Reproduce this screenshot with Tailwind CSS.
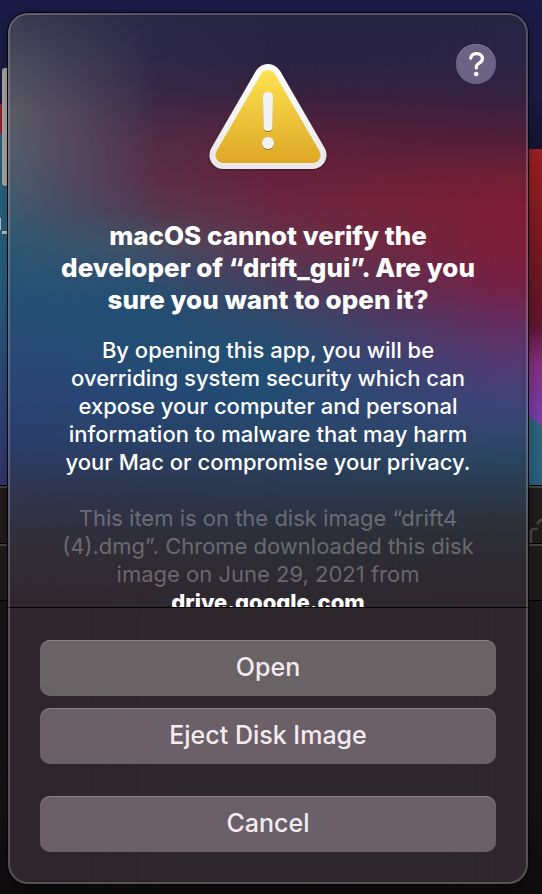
<!DOCTYPE html>
<html lang="en">
<head>
<meta charset="utf-8">
<meta name="viewport" content="width=device-width, initial-scale=1">
<title>macOS cannot verify the developer</title>
<script src="https://cdn.jsdelivr.net/npm/@tailwindcss/browser@4"></script>
</head>
<body class="bg-[#1a1b48] font-['Inter','Liberation_Sans',sans-serif]">
<div class="relative isolate flex h-screen overflow-hidden pt-[13px] pr-[14px] pb-[10px] pl-[8px]">

  <!-- Desktop: wallpaper, a file icon and the windows behind the dialog -->
  <div class="absolute inset-0 -z-10 bg-[linear-gradient(to_bottom,#1a1b47_0px,#1d1d49_90px,#171533_149px)]" aria-hidden="true">
    <div class="absolute left-0 top-[104px] h-[30px] w-10 bg-[#9c2531]"></div>
    <div class="absolute left-0 top-[134px] h-[351px] w-10 bg-[linear-gradient(to_bottom,#2d6c88,#2a6585_40%,#2f5080_68%,#363875)]"></div>
    <div class="absolute left-[2px] top-[68px] h-[118px] w-10 rounded-[3px] bg-[#b5b4b0] shadow"></div>
    <div class="absolute left-0 top-[218px] h-[12px] w-px bg-[#c9cccf]"></div>
    <div class="absolute left-[2px] top-[231px] h-[3px] w-5 bg-[#c9cccf] shadow"></div>
    <svg class="absolute right-0 top-[149px] h-[336px] w-10" viewBox="0 0 40 336" preserveAspectRatio="none">
      <defs>
        <linearGradient id="wall" x1="0" y1="0" x2="0" y2="1">
          <stop offset="0" stop-color="#a52125"/><stop offset=".3" stop-color="#7c1a22"/>
          <stop offset=".52" stop-color="#641530"/><stop offset=".64" stop-color="#8b3287"/>
          <stop offset=".8" stop-color="#7b42b0"/><stop offset="1" stop-color="#7b42b0"/>
        </linearGradient>
        <linearGradient id="sea" x1="0" y1="0" x2="0" y2="1">
          <stop offset="0" stop-color="#336a82"/><stop offset="1" stop-color="#2c6487"/>
        </linearGradient>
      </defs>
      <rect width="40" height="336" fill="url(#wall)"/>
      <path d="M0 246L27 267L40 277V336H0Z" fill="url(#sea)"/>
    </svg>
    <div class="absolute inset-x-0 top-[485px] bottom-0 flex flex-col bg-[#161213]">
      <div class="h-[58px] border-t border-black bg-[#231e1e] shadow-[inset_0_2px_0_#4a4546]"></div>
      <div class="h-[57px] border-t border-black bg-[#221d1d] shadow-[inset_0_2px_0_#4a4546]"></div>
      <div class="flex-1 border-t border-black bg-[linear-gradient(to_bottom,#1b1617,#171213_70%,#0f0c0d)]"></div>
    </div>
    <svg class="absolute right-0 top-[515px] h-7 w-[14px]" viewBox="0 0 14 28" fill="none" stroke="#4d4849" stroke-width="2.500">
      <path d="M3 28V17Q3 14 6 14H10"/><path d="M9 9L14 4"/>
    </svg>
  </div>

  <main class="relative isolate flex flex-1 flex-col overflow-hidden rounded-[20px] bg-[#2f262c] shadow-[0_0_0_1px_#050408,0_8px_24px_rgba(0,0,0,0.4)]" role="alertdialog" aria-labelledby="title" aria-describedby="message">
    <!-- Wallpaper colours showing through the translucent panel -->
    <div class="absolute inset-0 -z-10 bg-[linear-gradient(to_bottom,#3a394f_0px,#4a4a5b_47px,#595864_97px,#555a69_137px,#44586d_187px,#2e5672_237px,#264f74_287px,#294a75_337px,#2b4474_387px,#2b3d66_437px,#31344b_487px,#322e38_537px,#2f262c_600px)]"></div>
    <div class="absolute inset-0 -z-10 bg-[linear-gradient(to_bottom,#292647_0px,#2f2949_47px,#3c2a47_87px,#512d47_127px,#5a2f49_167px,#53394f_197px,#435064_232px,#2f5070_262px,#235074_287px,#234e74_337px,#274774_387px,#2a4064_437px,#2e3448_487px,#302d36_537px,#2f272c_600px)] [mask-image:linear-gradient(to_right,transparent_10px,black_150px)]"></div>
    <div class="absolute inset-0 -z-10 bg-[linear-gradient(to_bottom,#272443_0px,#292344_47px,#35223f_77px,#55213c_117px,#64213c_157px,#6b2640_187px,#643149_227px,#4b3c5a_267px,#2f4a6b_307px,#215074_347px,#244c73_387px,#294363_437px,#2c3850_477px,#2d303c_517px,#2e282d_600px)] [mask-image:linear-gradient(to_right,transparent_130px,black_270px)]"></div>
    <div class="absolute inset-0 -z-10 bg-[linear-gradient(to_bottom,#272443_0px,#2a2444_47px,#38213f_87px,#521e39_127px,#6b1f36_157px,#7c1d34_192px,#7c1f3a_237px,#742249_277px,#662c5e_307px,#543870_347px,#3f4277_387px,#34466f_417px,#2a4460_447px,#2b3a4c_477px,#2c323b_507px,#2d2a30_547px,#2e272c_600px)] [mask-image:linear-gradient(to_right,transparent_260px,black_490px)]"></div>

    <button type="button" aria-label="Help" class="absolute top-[31px] right-8 flex size-10 items-center justify-center rounded-full bg-[#6b6383] text-white shadow-[inset_0_1px_0_#81799a]">
      <svg class="size-10" viewBox="0 0 40 40" fill="none" aria-hidden="true">
        <path d="M14.800 14.200C15.100 11.300 17.200 9.600 20.600 9.600C24.200 9.600 26.400 11.600 26.400 14.400C26.400 16.600 25.300 17.900 23.200 19.200C21.100 20.500 20.300 21.400 20.300 23.200V24" stroke="currentColor" stroke-width="3.200" stroke-linecap="round"/>
        <circle cx="20.200" cy="30" r="2.300" fill="currentColor"/>
      </svg>
    </button>

    <section class="flex min-h-0 flex-1 basis-0 flex-col items-center overflow-hidden px-8 pt-[47px] text-center text-white">
      <svg class="h-[112px] w-[124px] shrink-0" viewBox="0 0 124 112" role="img" aria-label="Warning">
        <defs>
          <linearGradient id="rim" gradientUnits="userSpaceOnUse" x1="0" y1="3" x2="0" y2="109"><stop stop-color="#fff"/><stop offset="1" stop-color="#e8e8ea"/></linearGradient>
          <linearGradient id="gold" gradientUnits="userSpaceOnUse" x1="0" y1="9" x2="0" y2="103"><stop stop-color="#fde352"/><stop offset="1" stop-color="#dfa725"/></linearGradient>
          <filter id="drop" x="-20%" y="-20%" width="140%" height="140%"><feDropShadow dx="0" dy="1" stdDeviation="1" flood-opacity=".35"/></filter>
          <filter id="lift" x="-50%" y="-20%" width="200%" height="140%"><feDropShadow dx="0" dy="1" stdDeviation=".5" flood-color="#7a5a10" flood-opacity=".7"/></filter>
        </defs>
        <path d="M62 18L106.500 95H17.500Z" fill="url(#rim)" stroke="url(#rim)" stroke-width="28" stroke-linejoin="round" filter="url(#drop)"/>
        <path d="M62 18L106.500 95H17.500Z" fill="url(#gold)" stroke="url(#gold)" stroke-width="16" stroke-linejoin="round"/>
        <g fill="#f3f3f4" filter="url(#lift)">
          <path d="M57 37Q57 32 62 32Q67 32 67 37L66.300 67Q66.200 71 62 71Q57.800 71 57.700 67Z"/>
          <circle cx="62" cy="83" r="6"/>
        </g>
      </svg>
      <h1 id="title" class="mt-12 text-[26px] leading-8 font-extrabold whitespace-nowrap">macOS cannot verify the<br>developer of “drift_gui”. Are you<br>sure you want to open it?</h1>
      <p id="message" class="mt-5 text-[22px] leading-7 font-medium whitespace-nowrap">By opening this app, you will be<br>overriding system security which can<br>expose your computer and personal<br>information to malware that may harm<br>your Mac or compromise your privacy.</p>
      <p class="mt-7 text-[22px] leading-7 whitespace-nowrap text-white/30">This item is on the disk image “drift4<br>(4).dmg”. Chrome downloaded this disk<br>image on June 29, 2021 from<br><strong class="font-extrabold text-white">drive.google.com</strong></p>
    </section>

    <footer class="flex flex-col gap-3 border-t border-black px-8 py-8 text-[25px] font-medium text-[#f3ebf1]">
      <button type="button" class="h-14 rounded-[10px] bg-[#6a6366] shadow-[inset_0_1px_0_#8a8287]">Open</button>
      <button type="button" class="h-14 rounded-[10px] bg-[#6b6067] shadow-[inset_0_1px_0_#8a8087]">Eject Disk Image</button>
      <button type="button" class="mt-5 h-14 rounded-[10px] bg-[#6b6067] shadow-[inset_0_1px_0_#8a8087]">Cancel</button>
    </footer>

    <div class="pointer-events-none absolute inset-0 rounded-[20px] border-2 border-white/20" aria-hidden="true"></div>
  </main>
</div>
</body>
</html>
